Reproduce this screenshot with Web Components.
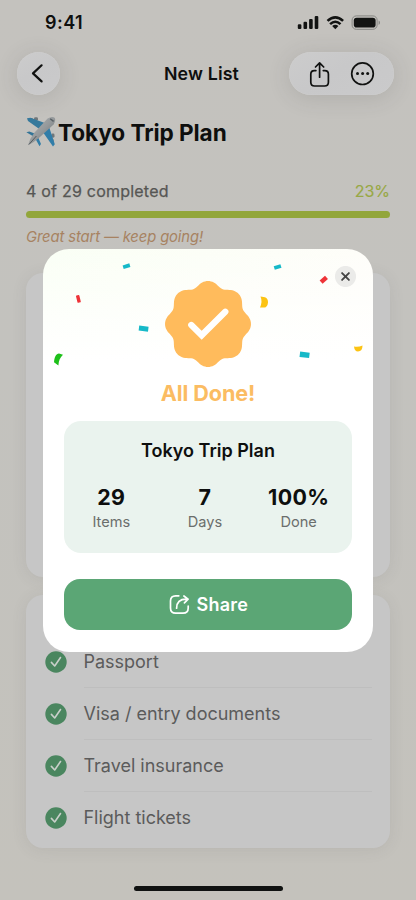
<!DOCTYPE html>
<html lang="en">
<head>
<meta charset="utf-8">
<meta name="viewport" content="width=device-width, initial-scale=1">
<title>Tokyo Trip Plan</title>
<style>
html,body{margin:0;padding:0;background:#c3c1bd}
body{width:416px;height:900px;overflow:hidden;font-family:Inter,"Liberation Sans",sans-serif;color:#0e0f0e}
</style>
</head>
<body>
<trip-screen></trip-screen>
<script>
function define(name, html, setup) {
  const t = document.createElement('template');
  t.innerHTML = html;
  customElements.define(name, class extends HTMLElement {
    constructor() {
      super();
      this.attachShadow({mode: 'open'}).append(t.content.cloneNode(true));
    }
    connectedCallback() { if (setup) setup(this, this.shadowRoot); }
  });
}

define('status-bar', `
<style>
:host{display:flex;height:45px;box-sizing:border-box;padding:0 36px 0 45px;justify-content:space-between;align-items:center}
.time{font-size:18px;font-weight:600;letter-spacing:.45px;line-height:22px}
svg{display:block}
</style>
<span class="time">9:41</span>
<svg width="83" height="16" viewBox="297 15 83 16">
<g fill="#121312"><rect x="297.8" y="24.3" width="3.6" height="4.8" rx="1.1"/><rect x="303.5" y="21.8" width="3.6" height="7.3" rx="1.1"/><rect x="309.1" y="18.9" width="3.6" height="10.2" rx="1.1"/><rect x="314.7" y="16" width="3.6" height="13.1" rx="1.1"/>
<path d="M332.2 26.1Q335.3 23.6 338.4 26.1L335.3 29.2Z"/></g>
<g fill="none" stroke="#121312" stroke-width="2.6"><path d="M327.5 20.9Q335.3 13.7 343.1 20.9"/><path d="M330.1 24.1Q335.3 19.4 340.5 24.1"/></g>
<rect x="352.1" y="15.9" width="25" height="13.4" rx="4.2" fill="none" stroke="#858582"/>
<rect x="353.8" y="17.7" width="21.8" height="9.8" rx="2.8" fill="#121312"/>
<path d="M378.6 20.5Q380 21.1 380 22.7T378.6 24.9Z" fill="#858582"/>
</svg>`);

define('glass-button', `
<style>
:host{display:flex;height:43px;box-sizing:border-box;border-radius:22px;align-items:center;justify-content:center;background:linear-gradient(150deg,#cccccc,#c8c8c9 45%,#cacacb);box-shadow:0 3px 22px rgba(70,70,68,.16),inset 0 0 1px rgba(225,225,225,.6)}
</style><slot></slot>`);

define('nav-bar', `
<style>
:host{display:grid;grid-template-columns:105px 1fr 105px;height:43px;margin-top:7px;padding:0 22px 0 17px;align-items:center}
.back{width:43px}
h1{margin:0 0 0 -8px;font-size:17.8px;font-weight:600;text-align:center;line-height:22px;letter-spacing:.15px}
svg{display:block;fill:none;stroke:#101110;stroke-linecap:round;stroke-linejoin:round}
</style>
<glass-button class="back"><svg width="43" height="43" viewBox="17 52 43 43" stroke-width="2.2"><path d="M41.6 65.3L33 73.4L41.6 81.4"/></svg></glass-button>
<h1>New List</h1>
<glass-button><svg width="105" height="43" viewBox="289 52 105 43" stroke-width="1.7">
<path d="M315.9 70.6H314.4Q310.8 70.6 310.8 74.2V82.2Q310.8 86 314.6 86H324.6Q328.4 86 328.4 82.2V74.2Q328.4 70.6 324.8 70.6H323.3M319.6 77.2V63M315.5 67L319.6 62.9L323.7 67"/>
<circle cx="362.5" cy="73.7" r="10.8"/><g fill="#101110" stroke="none"><circle cx="357.5" cy="73.4" r="1.5"/><circle cx="362.6" cy="73.4" r="1.5"/><circle cx="367.7" cy="73.4" r="1.5"/></g></svg></glass-button>`);

define('plane-icon', `
<style>:host{display:block;width:30px;height:31px}svg{display:block}</style>
<svg width="30" height="31" viewBox="26 117 30 31">
<defs><linearGradient id="b" x1="0" y1="0" x2="1" y2="1"><stop stop-color="#b4b7b8"/><stop offset=".5" stop-color="#95999b"/><stop offset="1" stop-color="#63686b"/></linearGradient></defs>
<g fill="#70777a"><rect x="34" y="117.3" width="4" height="3.4" rx="1.4"/><rect x="29" y="118" width="4" height="3" rx="1.4"/><rect x="51.3" y="133.5" width="3.2" height="4.2" rx="1.4"/><rect x="50.5" y="139" width="3.2" height="4" rx="1.4"/></g>
<path d="M27 118.2L30.5 117.7L45.5 123.3L40 129.5L28 121Z" fill="#36799c"/>
<path d="M49 126.7L54.8 144.2L53 146.4L42.8 132Z" fill="#317da8"/>
<path d="M26.4 132.2L29.3 131.6L36 134L33.5 136.6Z" fill="#337497"/>
<path d="M38.2 137.5L41 144L39.5 146.3L35.7 139.3Z" fill="#327da7"/>
<path d="M28 145.2Q29.5 139 34.3 132.8L47.6 118.4Q52 116 54.6 117.7Q56.2 120 53.6 124.4L39.7 137.3Q34.2 142.3 28 145.2Z" fill="url(#b)"/>
<path d="M29 144.4L36.4 136" stroke="#555b5e" stroke-width="1"/><path d="M50.2 118.7L53.6 121.4" stroke="#596065" stroke-width="1.4"/>
</svg>`);

define('list-header', `
<style>
:host{display:block;padding:22px 26px 0}
.title{display:flex;height:31px;align-items:center;gap:2px}
h2{margin:0;font-size:22.6px;font-weight:700;line-height:28px;white-space:nowrap;letter-spacing:-.07px}
.row{display:flex;justify-content:space-between;height:20px;line-height:20px;margin-top:32.5px;font-size:16px;font-weight:400;color:#565654;letter-spacing:.22px}
.done{-webkit-text-stroke:.25px #565654}
.pct{color:#98a845;letter-spacing:0;-webkit-text-stroke:.15px #98a845}
.bar{height:7px;border-radius:4px;background:#92a63b;margin-top:10.5px}
.note{margin-top:9px;height:20px;line-height:20px;font-size:14.8px;letter-spacing:-.12px;font-style:italic;color:#a78262;white-space:nowrap}
</style>
<div class="title"><plane-icon></plane-icon><h2>Tokyo Trip Plan</h2></div>
<div class="row"><span class="done">4 of 29 completed</span><span class="pct">23%</span></div>
<div class="bar"></div>
<div class="note"><span>Great start — keep going!</span></div>`);

define('check-row', `
<style>
:host{display:flex;height:52.1px;align-items:center;gap:17px}
svg{display:block;flex:none}
.label{flex:1;height:100%;box-sizing:border-box;border-bottom:1px solid var(--line,#bebebe);line-height:51.5px;font-size:18px;letter-spacing:-.01px;color:#5b5b5b;white-space:nowrap}
</style>
<svg width="22" height="22" viewBox="0 0 22 22"><circle cx="11" cy="11" r="10.7" fill="#4a865f"/><path d="M6.4 11.4L9.7 15L15.5 6.5" fill="none" stroke="#c9cfca" stroke-width="1.6" stroke-linecap="round" stroke-linejoin="round"/></svg>
<div class="label"><slot></slot></div>`);

define('list-card', `
<style>
:host{display:block;margin:0 26px;box-sizing:border-box;border-radius:17px;background:#c6c6c6;box-shadow:0 2px 15px rgba(80,80,76,.1);padding:0 18px 0 18.5px}
</style><slot></slot>`);

define('done-badge', `
<style>:host{display:block;width:88px;height:88px}svg{display:block}</style>
<svg width="88" height="88" viewBox="-44 -44 88 88"><path id="seal" fill="#ffbb5c"/><path d="M-16.7 1L-6.3 11.3L17.3-12.2" fill="none" stroke="#fff" stroke-width="6.3" stroke-linecap="round"/></svg>`,
(host, root) => {
  let d = '';
  for (let i = 0; i < 360; i += 2) {
    const a = i * Math.PI / 180;
    const r = 40.6 + 2.6 * Math.cos(8 * a) - .22 * Math.cos(16 * a);
    d += (i ? 'L' : 'M') + (r * Math.cos(a)).toFixed(2) + ' ' + (r * Math.sin(a)).toFixed(2);
  }
  root.getElementById('seal').setAttribute('d', d + 'Z');
});

define('confetti-layer', `
<style>:host{display:block;position:absolute;inset:0}svg{display:block}</style>
<svg width="330" height="140" viewBox="43 248.5 330 140">
<g fill="#16b9c8"><rect x="-3.5" y="-1.9" width="7" height="3.8" transform="translate(126.5 265.7) rotate(-17)"/><rect x="-3.5" y="-1.9" width="7" height="3.8" transform="translate(277.6 266.5) rotate(-17)"/><rect x="-4.7" y="-2.5" width="9.4" height="5" transform="translate(143.6 328.1) rotate(7)"/><rect x="-4.8" y="-2.7" width="9.6" height="5.4" transform="translate(304.6 354.3) rotate(7)"/></g>
<g fill="#ee3338"><rect x="-1.7" y="-3.8" width="3.4" height="7.6" rx=".8" transform="translate(78.4 298.4) rotate(-14)"/><rect x="-3.6" y="-2.2" width="7.2" height="4.4" transform="translate(323.8 279.3) rotate(-42)"/></g>
<path d="M54 361.8C54.4 356.5 56 353 59 353L63 354.2C60 357 58.8 360 58.4 364.9Z" fill="#1ec01a"/>
<path d="M260.5 296L265 296.8Q268.2 298.2 268 302Q267.5 306.7 264.4 307.1L260 307Q262.7 301 260.5 296ZM354 345.9Q358 347 362.5 345Q362.5 350.9 358 351Q354.5 351 354 345.9Z" fill="#fcc313"/>
</svg>`);

define('stat-item', `
<style>
:host{display:flex;flex-direction:column;align-items:center;width:94px}
b{font-size:21.4px;font-weight:700;line-height:26px;letter-spacing:.35px}
span{font-size:14.6px;line-height:20px;margin-top:2px;color:#6a6e6c}
</style><b><slot name="value"></slot></b><span><slot></slot></span>`);

define('done-dialog', `
<style>
:host{display:flex;flex-direction:column;align-items:center;position:absolute;left:43px;top:248.5px;width:330px;height:403px;box-sizing:border-box;border-radius:26px;padding:31.5px 21px 21.5px;overflow:hidden;background:linear-gradient(#fff0,#fff 112px),linear-gradient(100deg,#fafff5,#fffdfa)}
.close{position:absolute;right:17px;top:17px;width:21px;height:21px}
h3{margin:11px 0 0;font-size:21.6px;font-weight:700;line-height:28px;letter-spacing:-.08px;color:#fbbc62;white-space:nowrap}
.summary{display:flex;flex-direction:column;align-items:center;width:100%;height:132px;box-sizing:border-box;margin-top:14px;border-radius:17px;background:#eaf3ee;padding-top:18px}
h4{margin:0;font-size:18px;font-weight:600;line-height:24px;white-space:nowrap}
.stats{display:flex;margin:21px 6px 0 0;width:281px}
.share{display:flex;width:100%;height:51px;margin-top:26px;border-radius:16px;background:#5ba675;align-items:center;justify-content:center;gap:6.5px;color:#fff;font-size:18px;font-weight:600;letter-spacing:.2px;padding-left:1px;box-sizing:border-box}
svg{display:block;flex:none}
</style>
<confetti-layer></confetti-layer>
<svg class="close" viewBox="0 0 21 21"><circle cx="10.5" cy="10.5" r="10.6" fill="#ebebe9"/><path d="M7.1 7.1L13.9 13.9M13.9 7.1L7.1 13.9" stroke="#454545" stroke-width="1.9" stroke-linecap="round"/></svg>
<done-badge></done-badge>
<h3>All Done!</h3>
<div class="summary"><h4>Tokyo Trip Plan</h4><div class="stats">
<stat-item><span slot="value">29</span>Items</stat-item>
<stat-item><span slot="value">7</span>Days</stat-item>
<stat-item><span slot="value">100%</span>Done</stat-item></div></div>
<div class="share"><svg width="21" height="21" viewBox="169.5 594 21 21" fill="none" stroke="#fff" stroke-width="1.7" stroke-linecap="round" stroke-linejoin="round"><path d="M179.3 595.8H176.2Q171 595.8 171 601V608Q171 613.2 176.2 613.2H183.5Q188.7 613.2 188.7 608V606.2M177.1 608.2C177.2 602.2 180.6 599.2 186.8 599.2M184.4 596L188.6 599.2L184.9 602.9"/></svg><span class="share-label">Share</span></div>`);

define('trip-screen', `
<style>
:host{display:flex;flex-direction:column;position:relative;width:416px;height:900px;overflow:hidden;background:linear-gradient(#c4c2be,#c3c2be 40%,#c4c2bc)}
.one{flex:none;height:304px;margin-top:26px}
.two{flex:none;height:252.5px;margin-top:18px;padding-top:40.5px}
.last{--line:transparent}
.home{width:149px;height:5.5px;border-radius:3px;background:#101211;margin:38px 0 0 133.5px}
</style>
<status-bar></status-bar><nav-bar></nav-bar><list-header></list-header>
<list-card class="one"></list-card>
<list-card class="two"><check-row>Passport</check-row><check-row>Visa / entry documents</check-row><check-row>Travel insurance</check-row><check-row class="last">Flight tickets</check-row></list-card>
<div class="home"></div>
<done-dialog></done-dialog>`);
</script>
</body>
</html>
